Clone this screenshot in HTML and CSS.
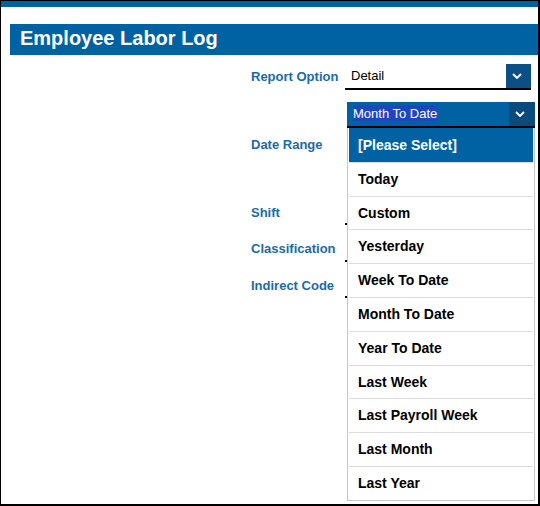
FILE: index.html
```html
<!DOCTYPE html>
<html lang="en">
<head>
<meta charset="utf-8">
<title>Employee Labor Log</title>
<link rel="stylesheet" href="styles.css">
</head>
<body>
<div class="page">
  <div class="topbar"></div>
  <h1 class="title">Employee Labor Log</h1>

  <div class="form">
    <div class="row">
      <label class="label">Report Option</label>
      <div class="select">
        <span class="value">Detail</span>
        <span class="arrow"><svg width="10" height="6" viewBox="0 0 10 6"><path d="M1 1 L5 5 L9 1" fill="none" stroke="#fff" stroke-width="1.8"/></svg></span>
      </div>
    </div>

    <div class="row row-date">
      <label class="label label-date">Date Range</label>
      <div class="field">
        <div class="select select-open">
          <span class="value"><span class="picked">Month To Date</span></span>
          <span class="arrow"><svg width="10" height="6" viewBox="0 0 10 6"><path d="M1 1 L5 5 L9 1" fill="none" stroke="#fff" stroke-width="1.8"/></svg></span>
        </div>
        <ul class="options">
          <li class="option option-active">[Please Select]</li>
          <li class="option">Today</li>
          <li class="option">Custom</li>
          <li class="option">Yesterday</li>
          <li class="option">Week To Date</li>
          <li class="option">Month To Date</li>
          <li class="option">Year To Date</li>
          <li class="option">Last Week</li>
          <li class="option">Last Payroll Week</li>
          <li class="option">Last Month</li>
          <li class="option">Last Year</li>
        </ul>
      </div>
    </div>

    <div class="row row-shift">
      <label class="label label-low">Shift</label>
      <div class="select"><span class="value"></span></div>
    </div>

    <div class="row row-tight">
      <label class="label">Classification</label>
      <div class="select"><span class="value"></span></div>
    </div>

    <div class="row row-tight">
      <label class="label label-low">Indirect Code</label>
      <div class="select"><span class="value"></span></div>
    </div>
  </div>
</div>
</body>
</html>
```

FILE: styles.css
```css
* {
  box-sizing: border-box;
}

html, body {
  margin: 0;
  padding: 0;
  background: #fff;
}

body {
  font-family: "Liberation Sans", Arial, sans-serif;
}

.page {
  width: 540px;
  height: 506px;
  border-style: solid;
  border-color: #000;
  border-width: 1px 2px 2px 1px;
  background: #fff;
  overflow: hidden;
}

.topbar {
  height: 6px;
  background: #0062a3;
}

.title {
  margin: 17px 0 0 9px;
  height: 31px;
  padding: 0 0 3px 10px;
  background: #0062a3;
  color: #fff;
  font-size: 20px;
  font-weight: bold;
  line-height: 28px;
}

.form {
  padding-left: 250px;
  margin-top: 9px;
}

.row {
  display: flex;
  align-items: flex-start;
}

.row-date {
  margin-top: 12px;
  height: 86px;
}

.row-shift {
  margin-top: 11px;
}

.row-tight {
  margin-top: 10px;
}

.label {
  width: 94px;
  flex: none;
  color: #1b6aa8;
  font-size: 13px;
  font-weight: bold;
  line-height: 26px;
}

.label-low {
  padding-top: 1px;
}

.label-date {
  line-height: 15px;
  padding-top: 35px;
}

.field {
  position: relative;
}

.select {
  display: flex;
  width: 186px;
  height: 26px;
  border-bottom: 2px solid #000;
  background: #fff;
}

.select .value {
  flex: 1;
  padding-left: 6px;
  font-size: 13px;
  line-height: 24px;
  color: #000;
  white-space: nowrap;
}

.arrow {
  width: 25px;
  height: 24px;
  flex: none;
  background: #0c4f86;
  display: flex;
  align-items: center;
  justify-content: center;
  padding-right: 4px;
}

.select-open {
  margin-left: 2px;
  width: 188px;
  background: #0061a3;
}

.select-open .arrow {
  width: 26px;
  background: #0b4a7c;
}

.picked {
  background: #1f45c0;
  color: #fff;
  padding: 1px 0 0;
}

/* open list of date range choices, drawn over the fields below */
.options {
  position: absolute;
  top: 26px;
  left: 2px;
  z-index: 2;
  width: 188px;
  margin: 0;
  padding: 0 1px;
  list-style: none;
  background: #fff;
  border: 1px solid #c6c6c6;
  border-top: none;
}

.option {
  height: 33.8px;
  padding: 1px 0 0 9px;
  border-top: 1px solid #dcdcdc;
  font-size: 14px;
  font-weight: bold;
  line-height: 31.8px;
  color: #000;
  white-space: nowrap;
}

.option-active {
  border-top: none;
  padding-top: 1px;
  line-height: 32.8px;
  background: #0062a3;
  color: #fff;
}
```
